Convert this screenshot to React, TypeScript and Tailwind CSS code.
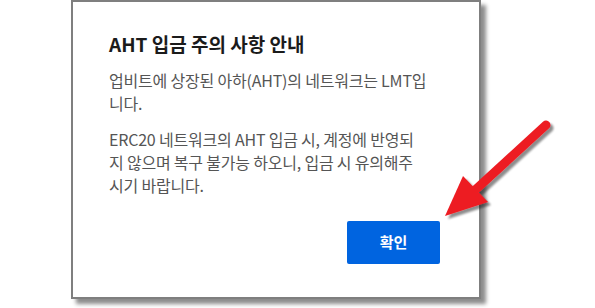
export default function App() {
  return (
    <div className="relative h-[308px] w-[595px] overflow-hidden bg-white font-['Noto_Sans_CJK_KR',sans-serif]">
      <div className="pl-[71px]">
        <div className="flex h-[299px] w-[410px] flex-col border-2 border-[#7f7f7f] bg-white pl-[36px] pr-[39px] pt-[29px] shadow-[5px_5px_4px_rgba(0,0,0,0.45)]">
          <h2 className="text-[19px] font-bold leading-[26px] text-[#1b1b1b] whitespace-nowrap">
            AHT 입금 주의 사항 안내
          </h2>

          <p className="mt-[12px] whitespace-nowrap text-[16px] leading-[23px] tracking-[-0.2px] text-[#555555]">
            업비트에 상장된 아하(AHT)의 네트워크는 LMT입
            <br />
            니다.
          </p>

          <p className="mt-[13px] whitespace-nowrap text-[16px] leading-[23px] tracking-[-0.2px] text-[#555555]">
            ERC20 네트워크의 AHT 입금 시, 계정에 반영되
            <br />
            지 않으며 복구 불가능 하오니, 입금 시 유의해주
            <br />
            시기 바랍니다.
          </p>

          <div className="mt-[24px] flex justify-end">
            <button className="flex h-[43px] w-[93px] items-center justify-center rounded-[2px] bg-[#0064e0] text-[15px] font-bold text-white">
              확인
            </button>
          </div>
        </div>
      </div>

      {/* red pointer arrow over the dialog */}
      <svg
        className="pointer-events-none absolute inset-0"
        width="595"
        height="308"
        viewBox="0 0 595 308"
      >
        <defs>
          <filter id="sh" x="-20%" y="-20%" width="150%" height="150%">
            <feGaussianBlur in="SourceAlpha" stdDeviation="1.2" />
            <feOffset dx="3" dy="3" result="b" />
            <feComponentTransfer>
              <feFuncA type="linear" slope="0.45" />
            </feComponentTransfer>
            <feMerge>
              <feMergeNode />
              <feMergeNode in="SourceGraphic" />
            </feMerge>
          </filter>
        </defs>
        <g filter="url(#sh)">
          <line x1="546" y1="125" x2="474" y2="191" stroke="#ed1c24" strokeWidth="9" strokeLinecap="round" />
          <polygon points="445,216 463,176 488,202" fill="#ed1c24" />
        </g>
      </svg>
    </div>
  );
}
